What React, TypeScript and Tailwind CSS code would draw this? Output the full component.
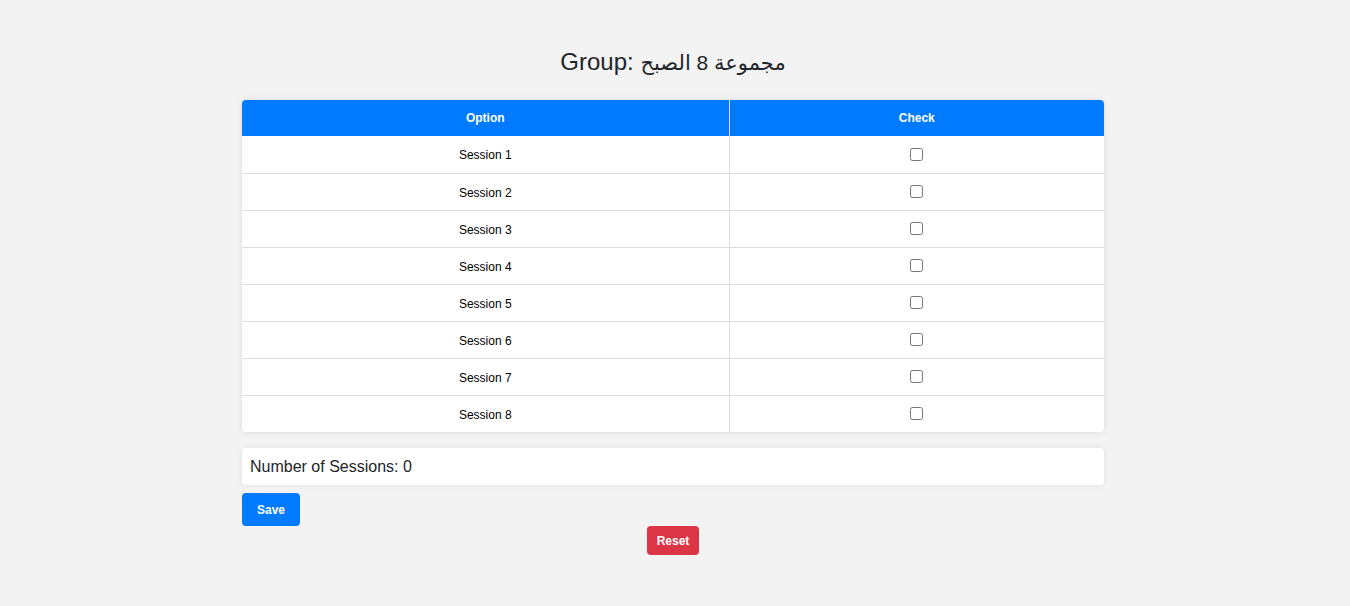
// Session picker page: title, table of sessions with checkboxes, count and buttons

import { useState } from "react";

const sessions = [1, 2, 3, 4, 5, 6, 7, 8];

export default function App() {
  const [checked, setChecked] = useState<boolean[]>(sessions.map(() => false));
  const count = checked.filter(Boolean).length;

  return (
    <div
      className="min-h-[606px] bg-[#f3f3f3] pr-[4px] text-[#212529]"
      style={{ fontFamily: '"Liberation Sans", Arial, "DejaVu Sans", sans-serif' }}
    >
      <div className="w-[862px] mx-auto pt-[48px]">
        {/* ===== TITLE ===== */}
        <h2 className="h-[28px] text-[24px] leading-[28px] text-center text-[#212529]">
          Group: <span className="text-[21px] leading-none">مجموعة 8 الصبح</span>
        </h2>

        {/* ===== TABLE ===== */}
        <div className="mt-[24px] bg-white rounded-[4px] overflow-hidden shadow-[0_0_6px_rgba(0,0,0,0.1)]">
          <table className="w-full border-collapse text-[12px]">
            <thead>
              <tr className="bg-[#007bff] text-white h-[36px]">
                <th className="w-[487px] font-bold border-r border-[#dde6f0]">Option</th>
                <th className="font-bold">Check</th>
              </tr>
            </thead>
            <tbody>
              {sessions.map((n, i) => (
                <tr key={n} className={`h-[37px] ${i > 0 ? "border-t border-[#dddddd]" : ""}`}>
                  <td className="text-center text-black border-r border-[#dddddd] pt-[2px]">Session {n}</td>
                  <td className="text-center">
                    <input
                      type="checkbox"
                      className="align-middle w-[13px] h-[13px] -translate-y-[1px]"
                      checked={checked[i]}
                      onChange={() => setChecked(checked.map((c, j) => (j === i ? !c : c)))}
                    />
                  </td>
                </tr>
              ))}
            </tbody>
          </table>
        </div>

        {/* ===== COUNT ===== */}
        <div className="mt-[16px] h-[37px] flex items-center px-[8px] bg-white rounded-[4px] shadow-[0_0_6px_rgba(0,0,0,0.08)] text-[16px]">
          Number of Sessions: {count}
        </div>

        {/* ===== BUTTONS ===== */}
        <div className="mt-[8px]">
          <button className="h-[33px] px-[15px] bg-[#007bff] text-white text-[12px] font-bold rounded-[4px]">
            Save
          </button>
        </div>
        <div className="flex justify-center">
          <button
            className="h-[29px] px-[10px] bg-[#dc3545] text-white text-[12px] font-bold rounded-[4px]"
            onClick={() => setChecked(sessions.map(() => false))}
          >
            Reset
          </button>
        </div>
      </div>
    </div>
  );
}
